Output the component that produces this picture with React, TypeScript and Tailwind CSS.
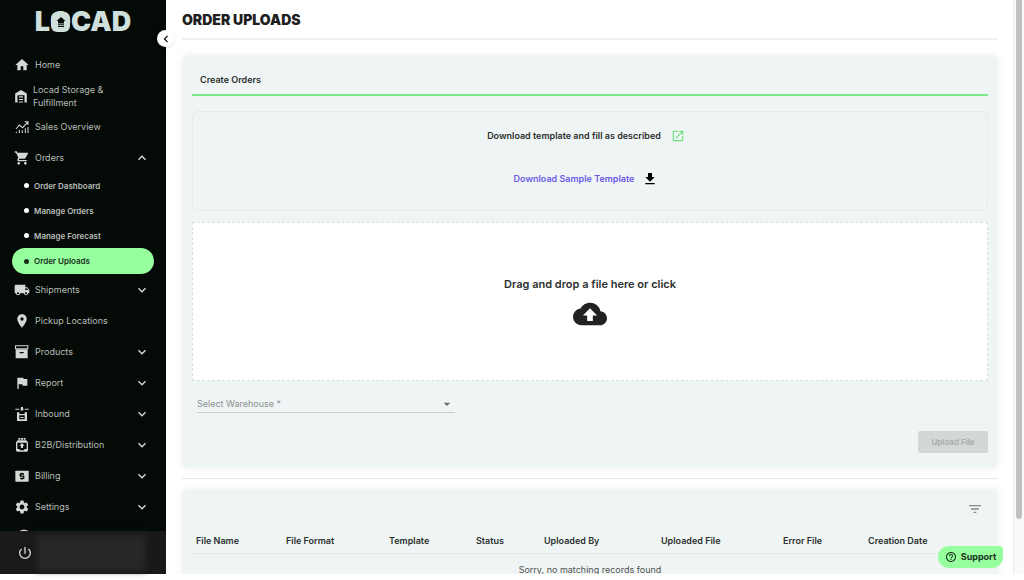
import { useState } from 'react';
import type { ReactNode } from 'react';
import clsx from 'clsx';
import {
  MdArrowDropDown,
  MdChevronLeft,
  MdCloudUpload,
  MdExpandLess,
  MdExpandMore,
  MdFileDownload,
  MdFilterList,
  MdFlag,
  MdHelp,
  MdHelpOutline,
  MdHome,
  MdLocalShipping,
  MdOpenInNew,
  MdPlace,
  MdPowerSettingsNew,
  MdSettings,
  MdShoppingCart,
} from 'react-icons/md';

const StorageIcon = () => (
  <svg viewBox="0 0 24 24" className="size-3.5" fill="currentColor">
    <path
      fillRule="evenodd"
      d="M12 1.500 2 7.500V23h20V7.500L12 1.500zM6 10.500h12V23h-2.500v-1.500h-7V23H6V10.500zm2.500 2v2h7v-2h-7zm0 4.500v2h7v-2h-7z"
    />
  </svg>
);

const SalesIcon = () => (
  <svg viewBox="0 0 24 24" className="size-4" fill="none" stroke="currentColor" strokeWidth="1.600">
    <path d="M3 15l5-6 5 4 7-8M16 4h5v5" />
    <path d="M3.500 21v-2M8 21v-5M12.500 21v-4M17 21v-7M21 21v-9" />
  </svg>
);

const ProductsIcon = () => (
  <svg viewBox="0 0 24 24" className="size-4" fill="currentColor">
    <path fillRule="evenodd" d="M1.500 2h20v6h-20V2zM3 3.500v3h17v-3H3z" />
    <path fillRule="evenodd" d="M2.500 8h18v13.500h-18V8zm6 4v2h6v-2h-6z" />
  </svg>
);

const InboundIcon = () => (
  <svg viewBox="0 0 24 24" className="size-4" fill="currentColor">
    <path d="M2 4h6v1.500H2zM16 4h6v1.500h-6zM10.500 1.500h3V4H15l-3 4-3-4h1.500z" />
    <path fillRule="evenodd" d="M4.500 9.500H8v2.500h8V9.500h3.500v13h-15v-13zM8 14v6h8v-6H8zm1.500 2.500h5V18h-5z" />
  </svg>
);

const DistributionIcon = () => (
  <svg viewBox="0 0 24 24" className="size-4" fill="currentColor">
    <path d="M6.500 1.500h3V4h-3zM10.500 1.500h3V4h-3zM14.500 1.500h3V4h-3z" />
    <path
      fillRule="evenodd"
      d="M5.500 5h13L21 8v12a2 2 0 0 1-2 2H5a2 2 0 0 1-2-2V8l2.500-3zM5 8.500V18h3l1.500 2h5L16 18h3V8.500H5z"
    />
    <path d="M12 9l4 4h-2.500v3.500h-3V13H8z" />
  </svg>
);

const BillingIcon = () => (
  <svg viewBox="0 0 24 24" className="size-4">
    <rect x="2" y="4" width="20" height="16.500" rx="1" fill="currentColor" />
    <path
      d="M15 9H9.500v3.200h5v3.300H9M12 7v2M12 15.500v2"
      fill="none"
      stroke="#040a05"
      strokeWidth="2"
    />
  </svg>
);

interface NavItem {
  label: string;
  icon: ReactNode;
  expandable?: boolean;
}

const topItems: NavItem[] = [
  { label: 'Home', icon: <MdHome className="size-4" /> },
  { label: 'Locad Storage & Fulfillment', icon: <StorageIcon /> },
  { label: 'Sales Overview', icon: <SalesIcon /> },
];

const orderLinks = ['Order Dashboard', 'Manage Orders', 'Manage Forecast', 'Order Uploads'];

const bottomItems: NavItem[] = [
  { label: 'Shipments', icon: <MdLocalShipping className="size-4" />, expandable: true },
  { label: 'Pickup Locations', icon: <MdPlace className="size-4" /> },
  { label: 'Products', icon: <ProductsIcon />, expandable: true },
  { label: 'Report', icon: <MdFlag className="size-4" />, expandable: true },
  { label: 'Inbound', icon: <InboundIcon />, expandable: true },
  { label: 'B2B/Distribution', icon: <DistributionIcon />, expandable: true },
  { label: 'Billing', icon: <BillingIcon />, expandable: true },
  { label: 'Settings', icon: <MdSettings className="size-4" />, expandable: true },
];

const columns = [
  { name: 'File Name', width: 'w-[90px]' },
  { name: 'File Format', width: 'w-[103px]' },
  { name: 'Template', width: 'w-[87px]' },
  { name: 'Status', width: 'w-[68px]' },
  { name: 'Uploaded By', width: 'w-[117px]' },
  { name: 'Uploaded File', width: 'w-[122px]' },
  { name: 'Error File', width: 'w-[85px]' },
  { name: 'Creation Date', width: 'w-[124px]' },
];

const rowClass =
  'flex h-[31px] w-full shrink-0 items-center gap-[5px] pl-3.5 pr-4 text-left text-[9px] leading-[13px] text-[#b9bdba]';

const NavRow = ({ item }: { item: NavItem }) => {
  if (!item.expandable) {
    return (
      <a href="#" className={rowClass}>
        <span className="shrink-0 text-[#d6d8d6]">{item.icon}</span>
        <span className="max-w-24">{item.label}</span>
      </a>
    );
  }

  return (
    <button type="button" className={rowClass}>
      <span className="shrink-0 text-[#d6d8d6]">{item.icon}</span>
      <span>{item.label}</span>
      <MdExpandMore className="ml-auto size-4 text-[#d6d8d6]" />
    </button>
  );
};

const Logo = () => (
  <div className="flex h-[49px] shrink-0 justify-center pt-1.5 text-[27px] leading-8 font-black text-[#cfdfdc]">
    L
    <span className="relative">
      O
      {/* House inside the O */}
      <span className="absolute inset-x-px top-1.5 flex h-5 items-center justify-center rounded-md bg-[#cfdfdc]">
        <svg viewBox="0 0 10 12" className="h-3 w-2.5">
          <path
            d="M5 1l4.500 4H8v2.500H2V5H.5zM2 8.300h6v1H2zM2 10h6v1H2z"
            fill="#040a05"
          />
        </svg>
      </span>
    </span>
    CAD
  </div>
);

const Sidebar = () => {
  return (
    <aside className="relative flex w-[166px] shrink-0 flex-col bg-[#040a05]">
      <Logo />
      <button
        type="button"
        aria-label="Collapse menu"
        className="absolute top-[30px] -right-2 z-10 flex size-[17px] items-center justify-center rounded-full bg-white text-black shadow"
      >
        <MdChevronLeft className="size-3.5" />
      </button>

      <nav className="flex min-h-0 flex-1 flex-col overflow-hidden">
        {topItems.map((item) => (
          <NavRow key={item.label} item={item} />
        ))}

        <button type="button" className={rowClass}>
          <MdShoppingCart className="size-4 text-[#d6d8d6]" />
          <span>Orders</span>
          <MdExpandLess className="ml-auto size-4 text-[#d6d8d6]" />
        </button>
        <ul className="shrink-0 px-3">
          {orderLinks.map((link) => {
            const active = link === 'Order Uploads';
            return (
              <li key={link}>
                <a
                  href="#"
                  className={clsx(
                    'flex items-center gap-[5px] rounded-full pl-3 text-[8px] font-semibold',
                    active ? 'h-[26px] bg-[#96ff9e] text-[#17301a]' : 'h-[25px] text-[#b9bdba]',
                  )}
                >
                  <span className={clsx('size-[5px] rounded-full', active ? 'bg-[#17301a]' : 'bg-white')} />
                  {link}
                </a>
              </li>
            );
          })}
        </ul>

        {bottomItems.map((item) => (
          <NavRow key={item.label} item={item} />
        ))}
        <a href="#" aria-label="Help" className={rowClass}>
          <MdHelp className="size-5 text-[#d6d8d6]" />
        </a>
      </nav>

      <div className="flex h-[43px] shrink-0 items-center gap-1 bg-[#191919] pr-5 pl-[17px]">
        <button type="button" aria-label="Log out" className="text-[#d6d8d6]">
          <MdPowerSettingsNew className="size-4" />
        </button>
        <div className="h-9 flex-1 bg-[#272727] blur-[3px]" />
      </div>
    </aside>
  );
};

const App = () => {
  const [warehouse, setWarehouse] = useState('');

  return (
    <div className="flex h-screen overflow-hidden bg-white pb-1.5 font-['Inter','Liberation_Sans',sans-serif] text-[#2b302e]">
      <Sidebar />

      <main className="relative min-w-0 flex-1 overflow-hidden pr-[15px] pl-4">
        <h1 className="flex h-[38px] items-center text-[14px] font-black text-[#1f1f1f]">ORDER UPLOADS</h1>
        <hr className="border-t-2 border-[#f1f1f1]" />

        <section className="mt-[15px] rounded-md bg-[#eff5f4] px-2.5 pb-[15px] shadow-[0_0_10px_rgba(0,0,0,0.06)]">
          <div className="flex h-[41px] items-center border-b-2 border-[#7fe68a] px-2 pt-2.5 text-[9px] font-semibold">
            <h2>Create Orders</h2>
          </div>

          <div className="mt-[15px] flex h-[100px] flex-col items-center rounded-md border border-[#e6ebea] pt-[17px] pr-2 text-[9px] leading-[14px] font-semibold">
            <p className="flex items-center gap-2.5">
              Download template and fill as described
              <a href="#" aria-label="Open template guide" className="text-[#6fe07b]">
                <MdOpenInNew className="size-3.5" />
              </a>
            </p>
            <a href="#" className="mt-7 flex items-center gap-2 text-[#6a5ae8]">
              Download Sample Template
              <MdFileDownload className="size-4 text-black" />
            </a>
          </div>

          <label className="mt-[11px] flex h-[159px] cursor-pointer flex-col items-center border border-dashed border-[#dadedd] bg-white pt-[52px] text-[11px] leading-[18px] font-semibold">
            Drag and drop a file here or click
            <MdCloudUpload className="mt-1 size-[34px] text-[#222]" />
            <input type="file" className="sr-only" />
          </label>

          <div className="relative mt-3.5 ml-[5px] w-[258px] border-b border-[#c9cfcd]">
            <select
              aria-label="Select Warehouse"
              value={warehouse}
              onChange={(e) => setWarehouse(e.target.value)}
              className="block h-[17px] w-full appearance-none bg-transparent text-[9px] text-[#8b918f] outline-none"
            >
              <option value="">Select Warehouse *</option>
            </select>
            <MdArrowDropDown className="pointer-events-none absolute top-px right-0 size-4 text-[#6b706e]" />
          </div>

          <div className="mt-[18px] flex justify-end">
            <button
              type="button"
              disabled
              className="h-[22px] w-[70px] rounded-xs bg-[#d3d8d7] text-[8px] font-semibold text-[#a4a9a7]"
            >
              Upload File
            </button>
          </div>
        </section>

        <hr className="my-2.5 border-[#e9e9e9]" />

        <section className="h-40 rounded-md bg-[#eff5f4] px-2.5 shadow-[0_0_10px_rgba(0,0,0,0.06)]">
          <div className="flex h-10 items-center justify-end pr-[5px]">
            <button type="button" aria-label="Filter" className="text-[#868b89]">
              <MdFilterList className="size-4" />
            </button>
          </div>
          <table className="w-full table-fixed text-[9px] leading-[13px]">
            <thead>
              <tr className="h-6 border-b border-[#e5eae9]">
                {columns.map((col) => (
                  <th key={col.name} className={clsx('pl-1 text-left font-semibold', col.width)}>
                    {col.name}
                  </th>
                ))}
              </tr>
            </thead>
            <tbody>
              <tr className="h-8">
                <td colSpan={columns.length} className="text-center text-[#4e5351]">
                  Sorry, no matching records found
                </td>
              </tr>
            </tbody>
          </table>
        </section>

        <button
          type="button"
          className="absolute right-2.5 bottom-1.5 flex h-[22px] w-[65px] items-center justify-center gap-1 rounded-[11px] rounded-tr-sm bg-[#96ff9e] text-[9px] font-bold text-[#17301a]"
        >
          <MdHelpOutline className="size-3" />
          Support
        </button>
      </main>

      {/* Scrollbar */}
      <div className="w-[11px] shrink-0 border-l border-[#ececec] bg-[#fafafa] pl-0.5">
        <div className="h-[519px] w-1.5 rounded-b-full bg-[#c1c1c1]" />
      </div>
    </div>
  );
};

export default App;
